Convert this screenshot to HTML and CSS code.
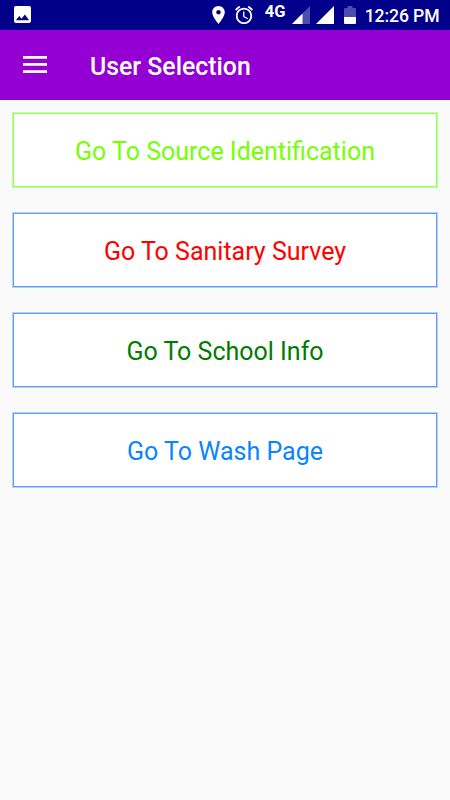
FILE: index.html
```html
<!DOCTYPE html>
<html lang="en">
<head>
    <meta charset="UTF-8">
    <meta name="viewport" content="width=device-width, initial-scale=1.0">
    <title>User Selection</title>
    <link rel="stylesheet" href="styles.css">
</head>
<body>
    <div class="status-bar">
        <svg class="icon-photo" viewBox="3 3 18 18">
            <path d="M21 19V5c0-1.100-.9-2-2-2H5c-1.100 0-2 .9-2 2v14c0 1.100.9 2 2 2h14c1.100 0 2-.9 2-2zM8.500 13.500l2.500 3.010L14.500 12l4.500 6H5l3.500-4.500z"/>
        </svg>
        <div class="status-right">
            <svg class="icon-pin" viewBox="5 2 14 20">
                <path d="M12 2C8.130 2 5 5.130 5 9c0 5.250 7 13 7 13s7-7.750 7-13c0-3.870-3.130-7-7-7zm0 9.500c-1.380 0-2.500-1.120-2.500-2.500s1.120-2.500 2.500-2.500 2.500 1.120 2.500 2.500-1.120 2.500-2.500 2.500z"/>
            </svg>
            <svg class="icon-alarm" viewBox="2 2 20 20">
                <path d="M22 5.720l-4.600-3.860-1.290 1.530 4.600 3.860L22 5.720zM7.880 3.390L6.600 1.860 2 5.710l1.290 1.530 4.590-3.850zM12.500 8H11v6l4.750 2.850.75-1.230-4-2.370V8zM12 4c-4.970 0-9 4.030-9 9s4.020 9 9 9c4.970 0 9-4.030 9-9s-4.030-9-9-9zm0 16c-3.870 0-7-3.130-7-7s3.130-7 7-7 7 3.130 7 7-3.130 7-7 7z"/>
            </svg>
            <span class="network">4G</span>
            <svg class="icon-signal" viewBox="0 0 18 18">
                <path class="faded" d="M0 18L18 0v18z"/>
                <path d="M0 18L10.500 7.500V18z"/>
            </svg>
            <svg class="icon-signal" viewBox="0 0 18 18">
                <path d="M0 18L18 0v18z"/>
            </svg>
            <svg class="icon-battery" viewBox="0 0 12 18">
                <path class="faded" d="M0 3q0-1 1-1h2.500V0h5v2H11q1 0 1 1v8H0z"/>
                <path d="M0 11h12v6q0 1-1 1H1q-1 0-1-1z"/>
            </svg>
            <span class="time">12:26 PM</span>
        </div>
    </div>

    <div class="app-bar">
        <svg class="icon-menu" viewBox="0 0 24 17">
            <path d="M0 0h24v2.700H0zM0 7.100h24v2.700H0zM0 14.200h24v2.700H0z"/>
        </svg>
        <h1>User Selection</h1>
    </div>

    <div class="menu">
        <button class="item source">Go To Source Identification</button>
        <button class="item survey">Go To Sanitary Survey</button>
        <button class="item school">Go To School Info</button>
        <button class="item wash">Go To Wash Page</button>
    </div>
</body>
</html>
```
FILE: styles.css
```css
body {
    margin: 0;
    min-height: 100vh;
    background-color: #fafafa;
    font-family: Roboto, sans-serif;
}
svg {
    display: block;
    flex: none;
    fill: #fff;
}
.status-bar {
    display: flex;
    align-items: flex-start;
    justify-content: space-between;
    height: 30px;
    box-sizing: border-box;
    padding: 0 10.5px 0 14px;
    background-color: #00008b;
    color: #fff;
}
.status-right {
    display: flex;
    align-items: flex-start;
}
.icon-photo {
    width: 17px;
    height: 17px;
    margin-top: 6px;
}
.icon-pin {
    width: 13px;
    height: 18px;
    margin-top: 6px;
}
.icon-alarm {
    width: 18px;
    height: 18px;
    margin: 6px 0 0 10.5px;
    overflow: visible;
}
.network {
    margin: 3px 0 0 11.5px;
    width: 21px;
    font-size: 16.5px;
    font-weight: 700;
    line-height: 17px;
}
.icon-signal {
    width: 18px;
    height: 18px;
    margin: 5.5px 0 0 6px;
}
.icon-battery {
    width: 12px;
    height: 18px;
    margin: 6px 0 0 10px;
}
.faded {
    opacity: 0.3;
}
.time {
    margin-left: 9px;
    font-size: 17.6px;
    font-weight: 500;
    line-height: 32px;
    letter-spacing: -0.1px;
}
.app-bar {
    display: flex;
    align-items: center;
    height: 70px;
    padding-left: 23px;
    background-color: #9400d3;
    color: #fff;
}
.icon-menu {
    width: 24px;
    height: 17px;
    margin-bottom: 1.5px;
}
h1 {
    margin: 3px 0 0 43px;
    font-size: 24.85px;
    font-weight: 500;
    line-height: 30px;
}
.menu {
    display: flex;
    flex-direction: column;
    gap: 24px;
    padding: 12px;
}
.item {
    height: 76px;
    padding: 3px 0 0;
    border: 1px solid #b5d0ff;
    box-shadow: inset 0 0 0 1px #619bff;
    background-color: #fff;
    font-family: inherit;
    font-size: 25px;
    cursor: pointer;
}
.source {
    border-color: #c0ff9c;
    box-shadow: inset 0 0 0 1px #90ff58;
    color: #76ff03;
}
.survey {
    color: #ff0000;
}
.school {
    color: #007b00;
}
.wash {
    color: #0a84ff;
}
```
